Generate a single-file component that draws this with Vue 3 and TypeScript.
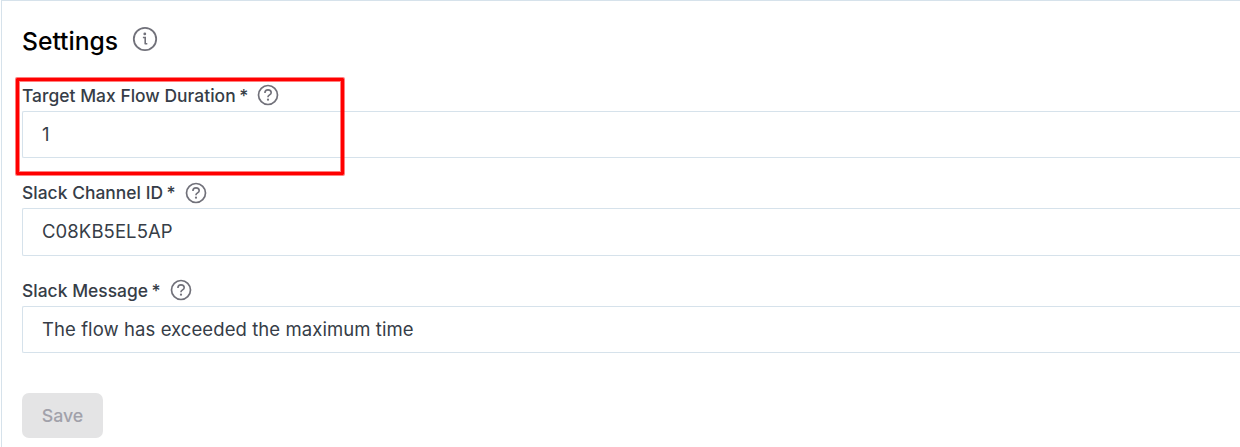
<script setup lang="ts">
interface Field {
  id: string
  label: string
  value: string
}

const fields: Field[] = [
  { id: 'duration', label: 'Target Max Flow Duration', value: '1' },
  { id: 'channel', label: 'Slack Channel ID', value: 'C08KB5EL5AP' },
  { id: 'message', label: 'Slack Message', value: 'The flow has exceeded the maximum time' },
]
</script>

<template>
  <main class="panel">
    <header class="heading">
      <h1>Settings</h1>
      <svg class="info" viewBox="0 0 26 26" fill="none" stroke="currentColor">
        <circle cx="13" cy="13" r="11.2" stroke-width="1.8" />
        <path d="M10.9 11.5h2.3v6.8M12.9 17.8h2.4" stroke-width="1.6" />
        <circle cx="12.8" cy="7.9" r="1.4" fill="currentColor" stroke="none" />
      </svg>
    </header>

    <section v-for="field in fields" :key="field.id" class="field" :class="field.id">
      <div class="label">
        <span class="name">{{ field.label }}</span>
        <span class="star">*</span>
        <svg class="help" viewBox="0 0 22 22" fill="none" stroke="currentColor">
          <circle cx="11" cy="11" r="9.5" stroke-width="1.7" />
          <path d="M7.9 8.9c0-1.9 1.3-3 3.1-3s3.2 1.1 3.2 2.8c0 2-3.2 2.2-3.2 4.1v.4" stroke-width="1.6" />
          <circle cx="11" cy="15.7" r="1.1" fill="currentColor" stroke="none" />
        </svg>
      </div>
      <div class="input"><span>{{ field.value }}</span></div>
    </section>

    <button class="save" type="button" disabled><span>Save</span></button>
    <div class="highlight"></div>
  </main>
</template>

<style>
body {
  margin: 0;
  overflow: hidden;
  background: #fff;
}
</style>

<style scoped>
.panel {
  position: relative;
  box-sizing: border-box;
  height: 447px;
  margin-left: 1px;
  padding-left: 20px;
  overflow: hidden;
  border-top: 1px solid #d6e2eb;
  border-left: 1px solid #d6e2eb;
  font-family: Inter, sans-serif;
  color: #363d47;
}

.heading {
  display: flex;
  align-items: center;
  height: 82px;
}

h1 {
  width: 110px;
  margin: -2px 0 0;
  font-size: 24.7px;
  font-weight: 500;
  letter-spacing: -0.03px;
  line-height: 30px;
  color: #000;
}

.info {
  width: 26px;
  height: 26px;
  margin-top: -6px;
  color: #71717a;
}

.field {
  height: 97px;
}

.channel {
  height: 98px;
}

.label {
  display: flex;
  align-items: center;
  box-sizing: border-box;
  height: 28px;
  padding-bottom: 3px;
  font-size: 17.4px;
  font-weight: 500;
  letter-spacing: 0.04px;
  white-space: nowrap;
}

.star {
  margin-left: 3.5px;
}

.help {
  width: 22px;
  height: 22px;
  margin-left: 9px;
  color: #71717a;
}

.duration .help,
.message .help {
  margin-bottom: 1px;
}

.input {
  display: flex;
  align-items: center;
  box-sizing: border-box;
  height: 47px;
  padding: 0 0 2px 19px;
  border: 1px solid #d6e2eb;
  border-right: 0;
  border-radius: 2px 0 0 2px;
  font-size: 18.5px;
  letter-spacing: 0.08px;
}

.channel .input {
  height: 48px;
}

.save {
  display: flex;
  align-items: center;
  justify-content: center;
  width: 81px;
  height: 45px;
  margin-top: 18px;
  padding: 0;
  border: 0;
  border-radius: 7px;
  background: #e4e4e5;
  color: #a1a1aa;
  font: 500 17.8px Inter, sans-serif;
}

/* Callout drawn over the first field */
.highlight {
  position: absolute;
  top: 77px;
  left: 14px;
  box-sizing: border-box;
  width: 328px;
  height: 97px;
  border: 3px solid #f00;
  border-radius: 1px;
  box-shadow: 0 0 0 1px rgba(255, 0, 0, 0.5), inset 0 0 0 1px rgba(255, 0, 0, 0.5);
}
</style>
